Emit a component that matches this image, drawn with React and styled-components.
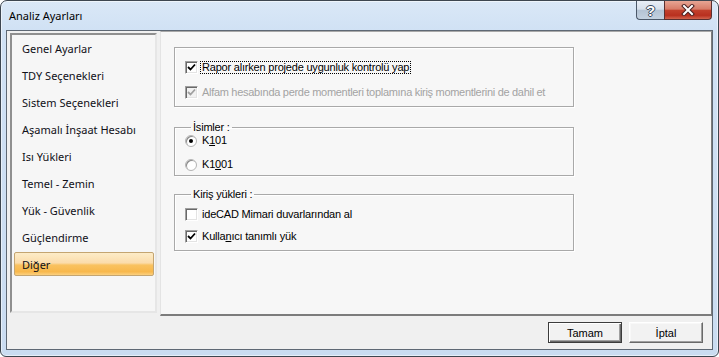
import React from 'react';
import styled, { createGlobalStyle } from 'styled-components';

const GlobalStyle = createGlobalStyle`
  html, body {
    margin: 0;
    padding: 0;
    background: #ffffff;
  }
  * {
    box-sizing: border-box;
  }
`;

const Window = styled.div`
  width: 719px;
  height: 357px;
  border: 1px solid #3d4650;
  border-radius: 7px 7px 6px 6px;
  background: linear-gradient(180deg, #dae8f7 0%, #d0e1f4 30px, #cadcf1 100%);
  box-shadow: inset 0 0 0 1px rgba(255, 255, 255, 0.55);
  display: flex;
  flex-direction: column;
  padding: 0 5px 6px 5px;
  overflow: hidden;
`;

const TitleBar = styled.div`
  height: 29px;
  display: flex;
  justify-content: space-between;
  align-items: flex-start;
  padding: 0 1px 0 3px;
`;

const TitleText = styled.div`
  font-family: "Noto Sans", sans-serif;
  font-size: 11px;
  line-height: 16px;
  padding-top: 7px;
  color: #000;
`;

const CaptionButtons = styled.div`
  display: flex;
`;

const HelpButton = styled.div`
  width: 28px;
  height: 19px;
  border: 1px solid #4b5869;
  border-top: none;
  border-right: none;
  border-bottom-left-radius: 4px;
  background: linear-gradient(180deg, #e9eff7 0%, #d6e0ec 45%, #b4c3d4 52%, #c3d1e0 100%);
  display: flex;
  align-items: center;
  justify-content: center;
  font-family: "Liberation Sans", Arial, sans-serif;
  font-weight: bold;
  font-size: 15px;
  color: #ffffff;
  text-shadow: 1px 0 0 #3b4a5c, -1px 0 0 #3b4a5c, 0 1px 0 #3b4a5c, 0 -1px 0 #3b4a5c;
`;

const CloseButton = styled.div`
  width: 48px;
  height: 19px;
  border: 1px solid #5a3030;
  border-top: none;
  border-bottom-right-radius: 4px;
  background: linear-gradient(180deg, #e7a594 0%, #d77c68 45%, #c2402c 52%, #b9301f 80%, #d2644e 100%);
  display: flex;
  align-items: center;
  justify-content: center;
`;

const Client = styled.div`
  flex: 1;
  border: 1px solid #5e6874;
  background: #f0f0f0;
  display: flex;
  flex-direction: column;
`;

const MainRow = styled.div`
  display: flex;
  align-items: flex-start;
  padding-left: 3px;
`;

const ListBox = styled.div`
  width: 147px;
  height: 280px;
  margin-top: 2px;
  border-top: 2px solid #8f8f8f;
  border-left: 2px solid #8f8f8f;
  border-right: 2px solid #e6e6e6;
  border-bottom: 2px solid #e6e6e6;
  background: #f6f6f6;
  display: flex;
  flex-direction: column;
  padding-top: 1px;
`;

const ListItem = styled.div`
  height: 24px;
  margin: 0 1px 3px 2px;
  padding-left: 7px;
  border: 1px solid ${(p) => (p.$selected ? '#c4a571' : 'transparent')};
  border-radius: 2px;
  background: ${(p) =>
    p.$selected
      ? 'linear-gradient(180deg, #fdecc8 0%, #fbdcab 45%, #f9c260 55%, #f8b84c 85%, #fbd080 100%)'
      : 'transparent'};
  display: flex;
  align-items: center;
  font-family: "Noto Sans", sans-serif;
  font-size: 11px;
  color: #101018;
`;

const Panel = styled.div`
  width: 552px;
  height: 285px;
  margin-left: 3px;
  border-top: 1px solid #a8a8a8;
  border-left: 1px solid #e4e4e4;
  border-right: 1px solid #7c7c7c;
  border-bottom: 2px solid #7c7c7c;
  background: #f7f7f7;
  display: flex;
  flex-direction: column;
  padding: 15px 0 0 13px;
`;

const Group = styled.fieldset`
  width: 400px;
  margin: ${(p) => p.$top || 0}px 0 0 0;
  padding: ${(p) => p.$padTop || 0}px 0 ${(p) => p.$padBottom || 0}px 10px;
  height: ${(p) => (p.$height ? `${p.$height}px` : 'auto')};
  border: 1px solid #a9a9a9;
  box-shadow: inset 1px 1px 0 #ffffff, 1px 1px 0 #ffffff;
  min-inline-size: 0;
`;

const Legend = styled.legend`
  margin-left: 6px;
  padding: 0 2px;
  font-family: "Liberation Sans", Arial, sans-serif;
  font-size: 11px;
  letter-spacing: -0.2px;
  line-height: 13px;
  color: #000;
`;

const Row = styled.div`
  height: 13px;
  margin-top: ${(p) => p.$gap || 0}px;
  display: flex;
  align-items: center;
`;

const CheckBox = styled.span`
  width: 13px;
  height: 13px;
  flex: none;
  border-top: 1px solid #a0a0a0;
  border-left: 1px solid #a0a0a0;
  border-right: 1px solid #ffffff;
  border-bottom: 1px solid #ffffff;
  box-shadow: inset 1px 1px 0 #696969, inset -1px -1px 0 #e3e3e3;
  background: ${(p) => (p.$disabled ? '#f2f2f2' : '#ffffff')};
  display: flex;
  align-items: center;
  justify-content: center;
`;

const Radio = styled.span`
  width: 12px;
  height: 12px;
  flex: none;
  margin-right: 1px;
  border-radius: 50%;
  border: 1px solid #b4b4b4;
  box-shadow: inset 1px 1px 0 #8a8a8a;
  background: #ffffff;
  display: flex;
  align-items: center;
  justify-content: center;

  &::after {
    content: '';
    width: 4px;
    height: 4px;
    border-radius: 50%;
    background: ${(p) => (p.$checked ? '#000' : 'transparent')};
  }
`;

const Label = styled.span`
  margin-left: ${(p) => (p.$focus ? 2 : 4)}px;
  padding: ${(p) => (p.$focus ? '0 1px' : '0')};
  border: ${(p) => (p.$focus ? '1px dotted #000' : 'none')};
  font-family: "Liberation Sans", Arial, sans-serif;
  font-size: 11px;
  letter-spacing: ${(p) => (p.$disabled ? '-0.3px' : '-0.2px')};
  line-height: 11px;
  white-space: nowrap;
  color: ${(p) => (p.$disabled ? '#a3a3a3' : '#000')};
`;

const Key = styled.span`
  text-decoration: underline;
`;

const ButtonRow = styled.div`
  display: flex;
  justify-content: flex-end;
  gap: 7px;
  margin-top: 6px;
  padding-right: 9px;
`;

const DlgButton = styled.div`
  width: 74px;
  height: 21px;
  display: flex;
  align-items: center;
  justify-content: center;
  background: #f2f2f2;
  font-family: "Liberation Sans", Arial, sans-serif;
  font-size: 11px;
  color: #000;
  border: 1px solid ${(p) => (p.$default ? '#3c3c3c' : '#ffffff')};
  border-right-color: ${(p) => (p.$default ? '#3c3c3c' : '#696969')};
  border-bottom-color: ${(p) => (p.$default ? '#3c3c3c' : '#696969')};
  box-shadow: ${(p) =>
    p.$default
      ? 'inset 1px 1px 0 #ffffff, inset -1px -1px 0 #696969, inset -2px -2px 0 #a0a0a0'
      : 'inset -1px -1px 0 #a0a0a0, inset 1px 1px 0 #f8f8f8'};
`;

const Tick = ({ color }) => (
  <svg width="9" height="9" viewBox="0 0 9 9">
    <path d="M1 4 L3.5 6.5 L8 1.5" fill="none" stroke={color} strokeWidth="1.8" />
  </svg>
);

const Check = ({ checked, disabled }) => (
  <CheckBox $disabled={disabled}>
    {checked && <Tick color={disabled ? '#a0a0a0' : '#000'} />}
  </CheckBox>
);

const CloseGlyph = () => (
  <svg width="16" height="12" viewBox="0 0 16 12">
    <path d="M4 2 L12 10 M12 2 L4 10" stroke="#4a2020" strokeWidth="4" strokeLinecap="square" />
    <path d="M4 2 L12 10 M12 2 L4 10" stroke="#ffffff" strokeWidth="2" strokeLinecap="square" />
  </svg>
);

const pages = [
  'Genel Ayarlar',
  'TDY Seçenekleri',
  'Sistem Seçenekleri',
  'Aşamalı İnşaat Hesabı',
  'Isı Yükleri',
  'Temel - Zemin',
  'Yük - Güvenlik',
  'Güçlendirme',
  'Diğer',
];

export default function App() {
  return (
    <>
      <GlobalStyle />
      <Window>
        <TitleBar>
          <TitleText>Analiz Ayarları</TitleText>
          <CaptionButtons>
            <HelpButton>?</HelpButton>
            <CloseButton>
              <CloseGlyph />
            </CloseButton>
          </CaptionButtons>
        </TitleBar>
        <Client>
          <MainRow>
            <ListBox>
              {pages.map((p) => (
                <ListItem key={p} $selected={p === 'Diğer'}>
                  {p}
                </ListItem>
              ))}
            </ListBox>
            <Panel>
              <Group $height={60} $padTop={13}>
                <Row>
                  <Check checked />
                  <Label $focus>Rapor alırken projede uygunluk kontrolü yap</Label>
                </Row>
                <Row $gap={12}>
                  <Check checked disabled />
                  <Label $disabled>
                    Alfam hesabında perde momentleri toplamına kiriş momentlerini de dahil et
                  </Label>
                </Row>
              </Group>
              <Group $top={14} $padBottom={4}>
                <Legend>İsimler :</Legend>
                <Row>
                  <Radio $checked />
                  <Label>
                    K<Key>1</Key>01
                  </Label>
                </Row>
                <Row $gap={11}>
                  <Radio />
                  <Label>
                    K1<Key>0</Key>01
                  </Label>
                </Row>
              </Group>
              <Group $top={12} $padTop={7} $padBottom={7}>
                <Legend>Kiriş yükleri :</Legend>
                <Row>
                  <Check />
                  <Label>ideCAD Mimari duvarlarından al</Label>
                </Row>
                <Row $gap={9}>
                  <Check checked />
                  <Label>
                    Kulla<Key>n</Key>ıcı tanımlı yük
                  </Label>
                </Row>
              </Group>
            </Panel>
          </MainRow>
          <ButtonRow>
            <DlgButton $default>Tamam</DlgButton>
            <DlgButton>İptal</DlgButton>
          </ButtonRow>
        </Client>
      </Window>
    </>
  );
}
